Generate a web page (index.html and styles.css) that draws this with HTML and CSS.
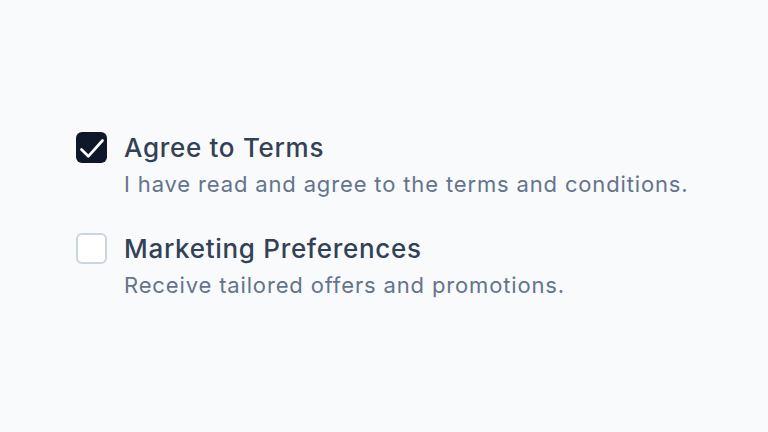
FILE: index.html
```html
<!DOCTYPE html>
<html>
	<head>
		<meta charset="utf-8" />
		<meta name="viewport" content="width=device-width, initial-scale=1">
		<title>Checkboxes</title>
		<link rel="stylesheet" href="styles.css">
	</head>
	<body>
		<div class="list">
			<label class="item">
				<span class="box checked">
					<svg width="31" height="31" viewBox="0 0 31 31" fill="none" stroke="#fff" stroke-width="2.7" stroke-linecap="round" stroke-linejoin="round"><path d="M5.5 17.5l6.8 6.8L26.5 8.5"/></svg>
				</span>
				<span class="text">
					<span class="title">Agree to Terms</span>
					<span class="desc">I have read and agree to the terms and conditions.</span>
				</span>
			</label>
			<label class="item">
				<span class="box"></span>
				<span class="text">
					<span class="title">Marketing Preferences</span>
					<span class="desc">Receive tailored offers and promotions.</span>
				</span>
			</label>
		</div>
	</body>
</html>
```

FILE: styles.css
```css
* {
	padding: 0;
	margin: 0;
	box-sizing: border-box;
}

body {
	width: 768px;
	height: 432px;
	background-color: #f8fafc;
	font-family: Inter, "Noto Sans", sans-serif;
	display: flex;
	align-items: center;
}

.list {
	display: flex;
	flex-direction: column;
	gap: 33px;
	padding-left: 76px;
}

.item {
	display: flex;
	gap: 17px;
	align-items: flex-start;
}

.box {
	width: 31px;
	height: 31px;
	border-radius: 6px;
	border: 2px solid #cbd5e1;
	background-color: #fff;
	display: flex;
	align-items: center;
	justify-content: center;
	flex-shrink: 0;
}

.box.checked {
	background-color: #0f172a;
	border: none;
}

.text {
	display: flex;
	flex-direction: column;
	gap: 4px;
}

.title {
	font-size: 26px;
	line-height: 32px;
	letter-spacing: 0.7px;
	color: #334155;
	font-weight: 500;
}

.desc {
	font-size: 22px;
	line-height: 32px;
	letter-spacing: 0.85px;
	color: #64748b;
}
```
